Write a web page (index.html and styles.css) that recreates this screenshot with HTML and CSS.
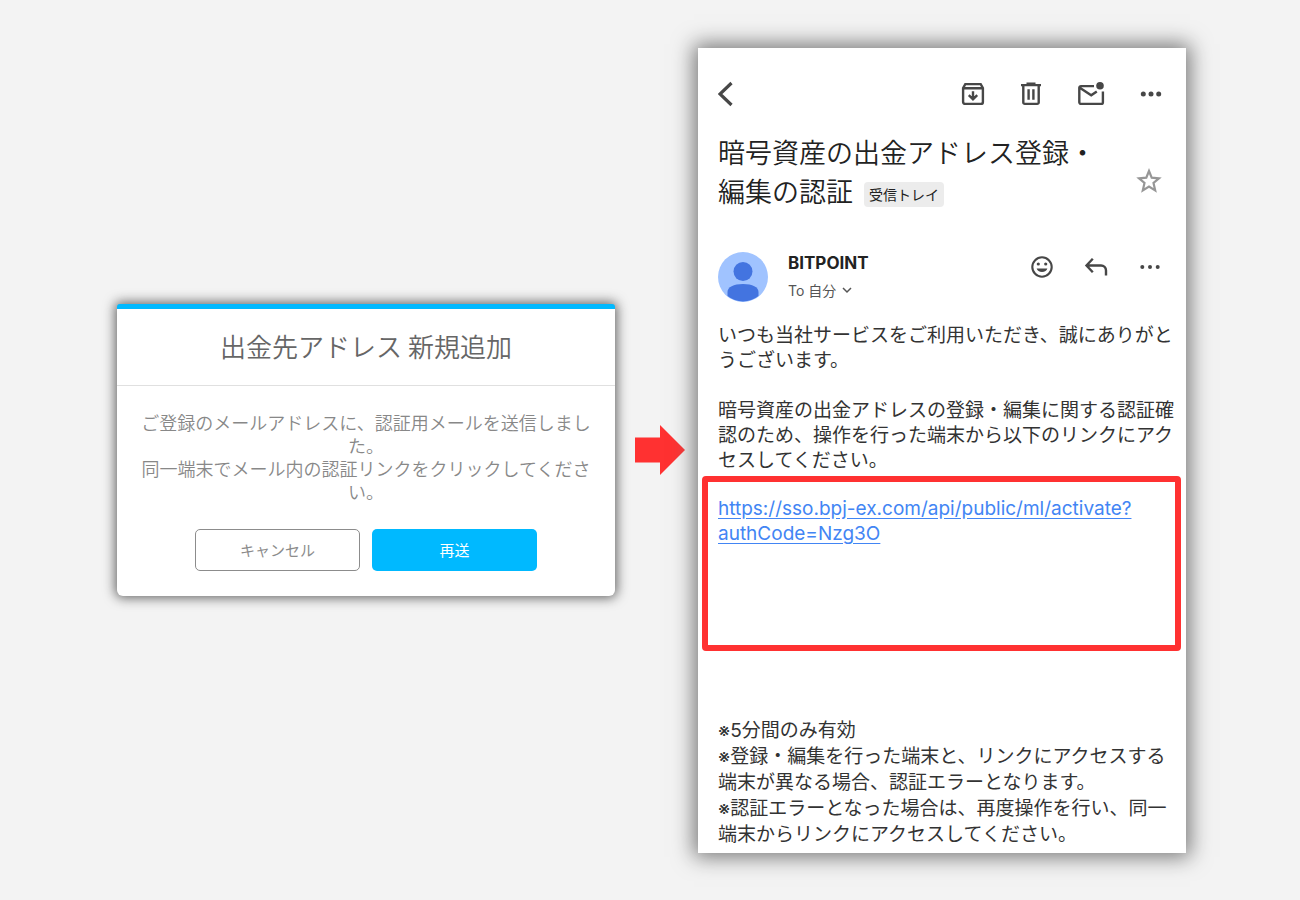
FILE: index.html
```html
<!DOCTYPE html>
<html lang="ja">
<head>
<meta charset="utf-8">
<title>出金先アドレス 新規追加</title>
<link rel="stylesheet" href="styles.css">
</head>
<body>
<main class="stage">
  <section class="dialog">
    <h1 class="dialog-title">出金先アドレス 新規追加</h1>
    <div class="dialog-body">
      <p class="dialog-text">ご登録のメールアドレスに、認証用メールを送信しました。<br>同一端末でメール内の認証リンクをクリックしてください。</p>
      <div class="dialog-actions">
        <button class="btn btn-outline" type="button">キャンセル</button>
        <button class="btn btn-primary" type="button">再送</button>
      </div>
    </div>
  </section>

  <svg class="arrow" viewBox="0 0 50 50" aria-hidden="true"><path d="M0 12.500h25V0l25 25-25 25V37.500H0z" fill="#ff3131"/></svg>

  <article class="mail">
    <div class="toolbar">
      <button class="icon-btn" type="button" aria-label="戻る"><svg width="16" height="26" viewBox="0 0 16 26"><path d="M13.500 2 2 13l11.500 11" fill="none" stroke="#474747" stroke-width="3.200"/></svg></button>
      <div class="tools">
        <button class="icon-btn" type="button" aria-label="アーカイブ"><svg width="24" height="24" viewBox="0 0 24 24" fill="none" stroke="#474747" stroke-width="2.400"><path d="M2.100 6 4.300 2.100h15.400L21.900 6v13.900a2 2 0 0 1-2 2H4.100a2 2 0 0 1-2-2zM2.100 6.200h19.800M12 9.300v7.500M7.800 13.200l4.200 4.100 4.200-4.100"/></svg></button>
        <button class="icon-btn" type="button" aria-label="削除"><svg width="22" height="24" viewBox="0 0 22 24" fill="none" stroke="#474747" stroke-width="2.400"><path d="M1 3.100h20M6.500 1.800h9M3.300 3v17.400a1.500 1.500 0 0 0 1.500 1.500h12.400a1.500 1.500 0 0 0 1.500-1.500V3M8.600 7.300v10.400M13.400 7.300v10.400"/></svg></button>
        <button class="icon-btn" type="button" aria-label="未読にする"><svg width="28" height="24" viewBox="0 0 28 24" fill="none" stroke="#474747" stroke-width="2.400"><path d="M17 4.100H4a1.700 1.700 0 0 0-1.700 1.700v14.400A1.700 1.700 0 0 0 4 21.900h20.200a1.700 1.700 0 0 0 1.700-1.700V9.500M2.800 5.800 14.200 13.300l5.600-3.900"/><circle cx="23" cy="3.800" r="3.800" fill="#474747" stroke="none"/></svg></button>
        <button class="icon-btn" type="button" aria-label="その他"><svg width="22" height="24" viewBox="0 0 22 24" fill="#474747"><circle cx="3.300" cy="12" r="2.500"/><circle cx="11" cy="12" r="2.500"/><circle cx="18.700" cy="12" r="2.500"/></svg></button>
      </div>
    </div>

    <div class="subject-row">
      <h2 class="subject">暗号資産の出金アドレス登録・<br>編集の認証<span class="tag">受信トレイ</span></h2>
      <button class="icon-btn star" type="button" aria-label="スター"><svg width="26" height="26" viewBox="0 0 26 26"><path d="M13 3 15.700 9.700 23 10.300 17.500 15 19.200 22.500 13 18.600 6.800 22.500 8.500 15 3 10.300 10.300 9.700z" fill="none" stroke="#979797" stroke-width="2.200"/></svg></button>
    </div>

    <div class="sender">
      <svg class="avatar" viewBox="0 0 50 50" aria-hidden="true"><circle cx="25" cy="25" r="25" fill="#a0c3ff"/><circle cx="25" cy="19.500" r="9.500" fill="#4374e0"/><path d="M9.500 44V40c0-5 6-8 15.500-8s15.500 3 15.500 8v4A25 25 0 0 1 9.500 44z" fill="#4374e0"/></svg>
      <div class="sender-info">
        <div class="sender-name">BITPOINT</div>
        <div class="sender-to">To 自分 <svg width="10" height="7" viewBox="0 0 10 7" aria-hidden="true"><path d="m1 1 4 4 4-4" fill="none" stroke="#555" stroke-width="1.500"/></svg></div>
      </div>
      <div class="sender-tools">
        <button class="icon-btn" type="button" aria-label="リアクション"><svg width="22" height="22" viewBox="0 0 22 22"><circle cx="11" cy="11" r="9.700" fill="none" stroke="#474747" stroke-width="2.100"/><circle cx="7.300" cy="8" r="1.600" fill="#474747"/><circle cx="14.700" cy="8" r="1.600" fill="#474747"/><path d="M5.600 12.500h10.800a5.600 4.600 0 0 1-10.800 0z" fill="#474747"/></svg></button>
        <button class="icon-btn" type="button" aria-label="返信"><svg width="24" height="22" viewBox="0 0 24 22"><path d="M8.800 2.800 2.500 9.500l6.300 6.700M2.500 9.500h14.500a5 5 0 0 1 5 5V19.500" fill="none" stroke="#474747" stroke-width="2.400"/></svg></button>
        <button class="icon-btn" type="button" aria-label="その他"><svg width="22" height="22" viewBox="0 0 22 22" fill="#474747"><circle cx="3.300" cy="11" r="2"/><circle cx="11" cy="11" r="2"/><circle cx="18.700" cy="11" r="2"/></svg></button>
      </div>
    </div>

    <div class="mail-body">
      <p>いつも当社サービスをご利用いただき、誠にありがとうございます。</p>
      <p>暗号資産の出金アドレスの登録・編集に関する認証確認のため、操作を行った端末から以下のリンクにアクセスしてください。</p>
    </div>
    <div class="highlight">
      <a class="link" href="#activate">https://sso.bpj-ex.com/api/public/ml/activate?<wbr>authCode=Nzg3O</a>
    </div>
    <div class="notes">
      <p>※5分間のみ有効</p>
      <p>※登録・編集を行った端末と、リンクにアクセスする端末が異なる場合、認証エラーとなります。</p>
      <p>※認証エラーとなった場合は、再度操作を行い、同一端末からリンクにアクセスしてください。</p>
    </div>
  </article>
</main>
</body>
</html>
```
FILE: styles.css
```css
* { box-sizing: border-box; }
body {
  margin: 0;
  background: #f3f3f3;
  font-family: Inter, "Noto Sans CJK JP", sans-serif;
}
h1, h2, p { margin: 0; font-weight: 400; }
button { font-family: inherit; cursor: pointer; }
svg { display: block; }

.stage {
  display: grid;
  grid-template-columns: 498fr 83fr 488fr;
  align-items: center;
  min-height: 100vh;
  padding: 47px 114px 47px 117px;
}

.dialog {
  background: #fff;
  border-top: 5px solid #00b9ff;
  border-radius: 3px 3px 6px 6px;
  box-shadow: 0 0 12px 2px #666;
  font-family: "Noto Sans CJK JP", sans-serif;
  text-align: center;
}
.dialog-title {
  padding: 18px 24px 20px;
  border-bottom: 1px solid #e0e0e0;
  color: #666;
  font-size: 26px;
  font-weight: 350;
  line-height: 38px;
}
.dialog-body { padding: 25px 23px; }
.dialog-text {
  color: #888;
  font-size: 18px;
  font-weight: 350;
  line-height: 23px;
}
.dialog-actions {
  display: flex;
  justify-content: center;
  gap: 12px;
  margin-top: 26px;
}
.btn {
  width: 165px;
  height: 42px;
  padding: 0 0 2px;
  border-radius: 5px;
  font-size: 15px;
}
.btn-outline { background: #fff; border: 1px solid #8c8c8c; color: #8c8c8c; }
.btn-primary { background: #00b9ff; border: 0; color: #fff; }

.arrow { width: 50px; height: 50px; margin-left: 20px; }

.mail {
  padding: 32px 10px 5px 20px;
  background: #fff;
  box-shadow: 0 0 20px 4px #777;
  color: #333;
}
.icon-btn { padding: 0; border: 0; background: none; }
.toolbar {
  display: flex;
  align-items: center;
  justify-content: space-between;
  height: 29px;
  padding-right: 14px;
}
.tools { display: flex; gap: 35px; }

.subject-row {
  display: flex;
  align-items: center;
  justify-content: space-between;
  margin-top: 23px;
  padding-right: 14px;
}
.subject {
  color: #222;
  font-family: "Noto Sans CJK JP", sans-serif;
  font-size: 27px;
  font-weight: 350;
  line-height: 39px;
}
.tag {
  display: inline-block;
  margin-left: 11px;
  padding: 0 5px;
  border-radius: 4px;
  background: #ececec;
  font-size: 14px;
  font-weight: 400;
  line-height: 25px;
  vertical-align: 2px;
}
.star { margin-top: 20px; }

.sender { display: flex; margin-top: 42px; padding-right: 15px; }
.avatar { width: 50px; height: 50px; }
.sender-info { flex: 1; margin-left: 20px; }
.sender-name {
  color: #222;
  font-size: 17px;
  font-weight: 700;
  line-height: 22px;
}
.sender-to {
  display: flex;
  align-items: center;
  gap: 6px;
  margin-top: 6px;
  color: #555;
  font-size: 14px;
  line-height: 22px;
}
.sender-tools { display: flex; align-items: flex-start; gap: 31px; padding-top: 4px; }

.mail-body {
  margin-top: 21px;
  font-size: 19px;
  line-height: 25px;
}
.mail-body p + p { margin-top: 25px; }

.highlight {
  min-height: 175px;
  margin: 3px -5px 0 -16px;
  padding: 14px 10px;
  border: 6px solid #ff3131;
  border-radius: 4px;
}
.link {
  color: #4285f4;
  font-size: 19px;
  line-height: 25px;
  text-underline-offset: 3px;
}

.notes {
  margin-top: 67px;
  font-size: 19px;
  line-height: 26px;
}
```
